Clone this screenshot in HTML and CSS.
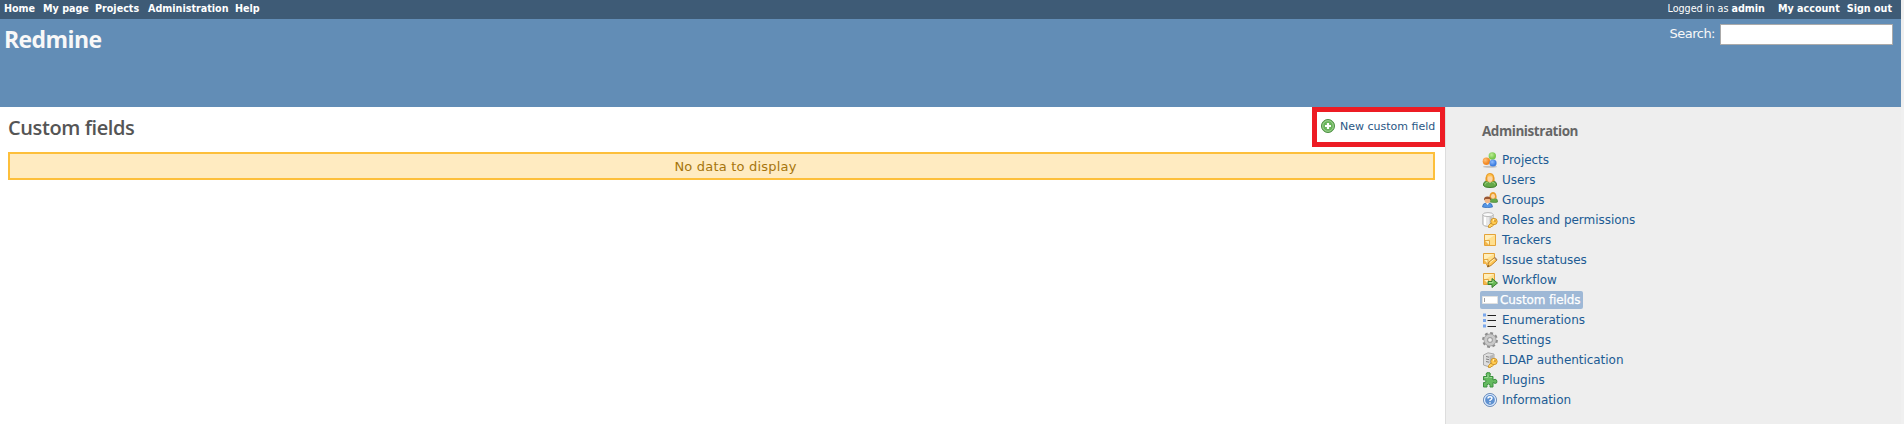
FILE: index.html
```html
<!DOCTYPE html>
<html lang="en">
<head>
<meta charset="utf-8">
<title>Custom fields - Redmine</title>
<link rel="stylesheet" href="styles.css">
</head>
<body>
<div class="page">
  <nav class="top-menu">
    <a class="m-home">Home</a><a class="m-page">My page</a><a class="m-projects">Projects</a><a class="m-admin">Administration</a><a class="m-help">Help</a>
    <span class="logged">Logged in as <b>admin</b></span><a class="account">My account</a><a class="signout">Sign out</a>
  </nav>
  <header class="header">
    <h1>Redmine</h1>
    <label class="search"><span>Search:</span><input type="text"></label>
  </header>
  <div class="main">
    <main class="content">
      <div class="title-row">
        <h2>Custom fields</h2>
        <a class="new-field">
          <svg width="14" height="14" viewBox="0 0 14 14"><circle cx="7" cy="7" r="6.5" fill="#69b35b" stroke="#4c8e42"/><circle cx="7" cy="7" r="5.3" fill="none" stroke="#a5d696" stroke-width=".9"/><path d="M7 4v6M4 7h6" stroke="#fff" stroke-width="2.2"/></svg>
          <span>New custom field</span>
        </a>
      </div>
      <p class="nodata">No data to display</p>
    </main>
    <aside class="sidebar">
      <h3>Administration</h3>
      <ul>
        <li><a><svg viewBox="0 0 16 16"><defs><radialGradient id="o" cx=".35" cy=".35"><stop offset="0" stop-color="#ffc27a"/><stop offset="1" stop-color="#f38a25"/></radialGradient><radialGradient id="g" cx=".4" cy=".35"><stop offset="0" stop-color="#bdec94"/><stop offset="1" stop-color="#78c84d"/></radialGradient><radialGradient id="b" cx=".4" cy=".35"><stop offset="0" stop-color="#8fbcff"/><stop offset="1" stop-color="#3f7fe0"/></radialGradient></defs><ellipse cx="8" cy="14.7" rx="7" ry="1" fill="#c0c0c0"/><circle cx="10.3" cy="4" r="3.7" fill="url(#g)"/><circle cx="4.4" cy="9.200" r="3.700" fill="url(#o)"/><circle cx="11" cy="11" r="3.600" fill="url(#b)"/></svg><span>Projects</span></a></li>
        <li><a><svg viewBox="0 0 16 16"><path d="M1.500 13.500Q1 9.500 5 9h6q4 .5 3.500 4.500-1 2-6.500 2t-6.500-2z" fill="#65a948" stroke="#3f7d2e"/><path d="M3 12.500q1-2.500 3-2.500M13 12.500q-1-2.500-3-2.500" stroke="#9bd07c" fill="none"/><path d="M5.500 9L8 11l2.500-2V7h-5z" fill="#f8cf9c"/><path d="M3.500 9Q3 1 8 1t4.500 8l-2 .5h-5z" fill="#e99b27"/><ellipse cx="8" cy="6.500" rx="2.700" ry="3.300" fill="#fbd5a5"/><path d="M4.500 5Q6 1.500 8 2t3.500 3Q8 3.500 4.500 5" fill="#ffc34e"/></svg><span>Users</span></a></li>
        <li><a><svg viewBox="0 0 16 16"><path d="M7 9.500q0-3.500 4-3.500 5 0 4.500 4Q14 11 8 10z" fill="#65a948" stroke="#4d883d" stroke-width=".7"/><path d="M7.500 6.500Q7 0 11 0t3.500 6.500z" fill="#e99b27"/><ellipse cx="11" cy="4.300" rx="2" ry="2.500" fill="#fbd5a5"/><path d="M.5 15q0-4 4-4h2q4 0 4 4Q5 16.500 .5 15z" fill="#5595e3" stroke="#2f69b4" stroke-width=".7"/><path d="M4 11l1.500 2L7 11z" fill="#fff"/><circle cx="5.500" cy="8.500" r="2.800" fill="#f3b887"/><path d="M2 8.500Q1.500 4.500 5.500 4.500T9 8.500L7.500 7h-4z" fill="#985633"/></svg><span>Groups</span></a></li>
        <li><a><svg viewBox="0 0 16 16"><path d="M.8 2.500v10q1.500 2 5.200 2t5.200-2v-10" fill="#e7e7e7" stroke="#aaa" stroke-width=".8"/><path d="M3 4v9" stroke="#fff" stroke-width="2"/><path d="M9 5v8" stroke="#c4c4c4" stroke-width="3"/><ellipse cx="6" cy="2.600" rx="5.200" ry="2" fill="#fafafa" stroke="#aaa" stroke-width=".8"/><use href="#key"/></svg><span>Roles and permissions</span></a></li>
        <li><a><svg viewBox="0 0 16 16"><g id="note"><path d="M2.500 2.500h11v11h-11z" fill="#ffdf8e" stroke="#e4a338"/><path d="M3 3h10L3 9z" fill="#ffeebb"/><path d="M3 8.500h4.500V13" fill="#fff1bd" stroke="#dda03a" stroke-width=".9"/><path d="M3 9l4 4H3z" fill="#f3b64d"/></g></svg><span>Trackers</span></a></li>
        <li><a><svg viewBox="0 0 16 16"><path d="M1.500 1.500h11V10L6 15l-2-3.500H1.500z" fill="#ffdf8e" stroke="#e4a338"/><path d="M2 2h10L2 8z" fill="#ffeebb"/><path d="M2 7.500h4V12" fill="#fff1bd" stroke="#dda03a" stroke-width=".9"/><path d="M2 8l4 4H2z" fill="#f3b64d"/><path d="M5.500 15l1-4.500 6-5L15 8l-6 5.500z" fill="#ffc95a" stroke="#b87921" stroke-width=".9"/><path d="M8 10.500l5-4" stroke="#fff0bb"/><path d="M12.500 5.500L15 8" stroke="#a98265" stroke-width="1.500"/><path d="M5.500 15l.5-2 1.500 1z" fill="#6e4a20"/></svg><span>Issue statuses</span></a></li>
        <li><a><svg viewBox="0 0 16 16"><use href="#note" x="-1" y="-1"/><path d="M6 9.500h4V6.500l5.500 4.500-5.500 4.500V12.500H6z" fill="#69b957" stroke="#397e2d"/><path d="M7 10.500h4V8.500" stroke="#a7de91" fill="none"/></svg><span>Workflow</span></a></li>
        <li><a class="selected"><svg viewBox="0 0 16 16"><path d="M.5 4.500h15v7H.5z" fill="#fff" stroke="#e0e0df"/><path d="M2.500 6v4" stroke="#888" stroke-width=".8"/></svg><span>Custom fields</span></a></li>
        <li><a><svg viewBox="0 0 16 16"><path d="M1 1.500h3v3H1zM1 7h3v3H1zM1 12.500h3v3H1z" fill="#79a7ec"/><path d="M5.500 3.500H14M5.500 8.500H14M5.500 14.500H14" stroke="#222" stroke-width="1"/></svg><span>Enumerations</span></a></li>
        <li><a><svg viewBox="0 0 16 16"><circle cx="8" cy="8" r="6.600" fill="none" stroke="#8c8c8c" stroke-width="2.600" stroke-dasharray="2.700 2.484"/><circle cx="8" cy="8" r="4.500" fill="none" stroke="#999" stroke-width="3.800"/><circle cx="8" cy="8" r="4.300" fill="none" stroke="#c9c9c9" stroke-width="3"/><circle cx="8" cy="8" r="2.400" fill="#eee" stroke="#888" stroke-width=".8"/></svg><span>Settings</span></a></li>
        <li><a><svg viewBox="0 0 16 16"><path d="M1.500 3L6 .8l6 1.200v10L7.500 15l-6-2z" fill="#dedede" stroke="#999" stroke-width=".8"/><path d="M7.500 4v10.500l4-2.500V2.500z" fill="#b5b5b5"/><path d="M4 4.500l3 .7M4 7l3 .7M4 9.500l3 .7" stroke="#808080"/><g id="key"><path d="M10 10l-3.500 3.500v2h2l.5-1h1.200l1.800-2" fill="#ffd15a" stroke="#c58a21" stroke-width=".8"/><circle cx="12" cy="9.500" r="3.200" fill="#ffca50" stroke="#c58a21" stroke-width=".8"/><path d="M11 8h1" stroke="#fff5ca" stroke-width="1.300"/><circle cx="13" cy="9" r=".8" fill="#b97918"/></g></svg><span>LDAP authentication</span></a></li>
        <li><a><svg viewBox="0 0 16 16"><path d="M1.500 4.500H5Q3.500 2.500 4.500 1q2-1.200 3.500 0 1 1.500-.5 3.500H11V8q2.500-1.500 3.500 0 .8 2 0 3-1 1-3.500-.5v4.500H8q1-3-1.500-3T5 15H1.500v-4.500Q4 11 4 9T1.500 8z" fill="#65ba60" stroke="#3d9140" stroke-linejoin="round"/><path d="M2.500 5.500H6V2.500M7.500 5.500H10" stroke="#9bd896" fill="none"/></svg><span>Plugins</span></a></li>
        <li><a><svg viewBox="0 0 16 16"><circle cx="8" cy="8" r="6.500" fill="#5f91d0" stroke="#6d8db9"/><circle cx="8" cy="8" r="5.500" fill="none" stroke="#e4efff" stroke-width="1.200"/><path d="M6 6.500Q6 4.800 8 4.800t2 1.500Q10 7.300 8 8.300v.8M8 10.200v1.300" stroke="#fff" stroke-width="1.400" fill="none"/></svg><span>Information</span></a></li>
      </ul>
    </aside>
  </div>
</div>
</body>
</html>
```
FILE: styles.css
```css
* { box-sizing: border-box; }
body { margin: 0; background: #f0f0f0; font-family: "DejaVu Sans", Verdana, sans-serif; font-size: 12px; color: #484848; overflow: hidden; }
h1, h2, h3, p, ul { margin: 0; padding: 0; }
h1, h2, h3 { font-family: "Open Sans", "Noto Sans", sans-serif; white-space: nowrap; }
svg { flex: none; display: block; }
.page { width: 1901px; height: 424px; display: flex; flex-direction: column; }
.top-menu { height: 19px; background: #3e5b76; display: flex; padding: 0 9px 0 4px; font-size: 9.6px; line-height: 17px; font-weight: bold; color: #fff; white-space: nowrap; }
.m-home { width: 39px; }
.m-page { width: 52px; }
.m-projects { width: 53px; }
.m-admin { width: 87px; }
.logged { margin-left: auto; font-weight: normal; margin-right: 13px; }
.account { margin-right: 7px; }
.header { height: 88px; background: #628db6; display: flex; justify-content: space-between; padding: 5px 8px 0 4px; color: #f8f8f8; }
.header h1 { font-size: 23px; line-height: 31px; font-weight: 700; letter-spacing: -.6px; }
.search { display: flex; height: 21px; gap: 5px; }
.search span { font-size: 13px; line-height: 19px; letter-spacing: -.5px; }
.search input { width: 173px; height: 21px; border: 1px solid #aaa; background: #fff; padding: 0; }
.main { flex: 1; display: flex; }
.content { width: 1445px; background: #fff; }
.title-row { display: flex; justify-content: space-between; height: 45px; padding-left: 8px; }
.title-row h2 { font-size: 20px; line-height: 41px; font-weight: 600; color: #555; letter-spacing: -.4px; }
.new-field { width: 133px; height: 40px; border: 5px solid #ed1c24; display: flex; gap: 5px; padding: 7px 0 0 4px; font-size: 11px; line-height: 15px; color: #2a5685; white-space: nowrap; }
.nodata { margin: 0 10px 0 8px; padding-left: 28px; height: 28px; border: 2px solid #fdbf3b; background: #ffebc1; color: #a6750c; text-align: center; font-size: 13px; line-height: 25px; letter-spacing: .2px; }
.sidebar { flex: 1; background: #eee; border-left: 1px solid #ddd; padding: 14px 0 0 34px; }
.sidebar h3 { font-size: 13.5px; line-height: 20px; color: #666; font-weight: 700; padding-left: 2px; letter-spacing: -.45px; }
.sidebar ul { list-style: none; padding-top: 9px; }
.sidebar li { height: 20px; display: flex; align-items: center; }
.sidebar a { display: flex; align-items: center; gap: 4px; height: 18px; padding: 0 2px; color: #205b93; font-size: 12px; line-height: 16px; white-space: nowrap; letter-spacing: -.04px; }
.sidebar svg { width: 16px; height: 16px; }
.sidebar .selected { width: 103px; background: #9eb8d6; color: #fff; border-radius: 2px; gap: 2px; -webkit-text-stroke: .25px #fff; letter-spacing: -.12px; }
```
